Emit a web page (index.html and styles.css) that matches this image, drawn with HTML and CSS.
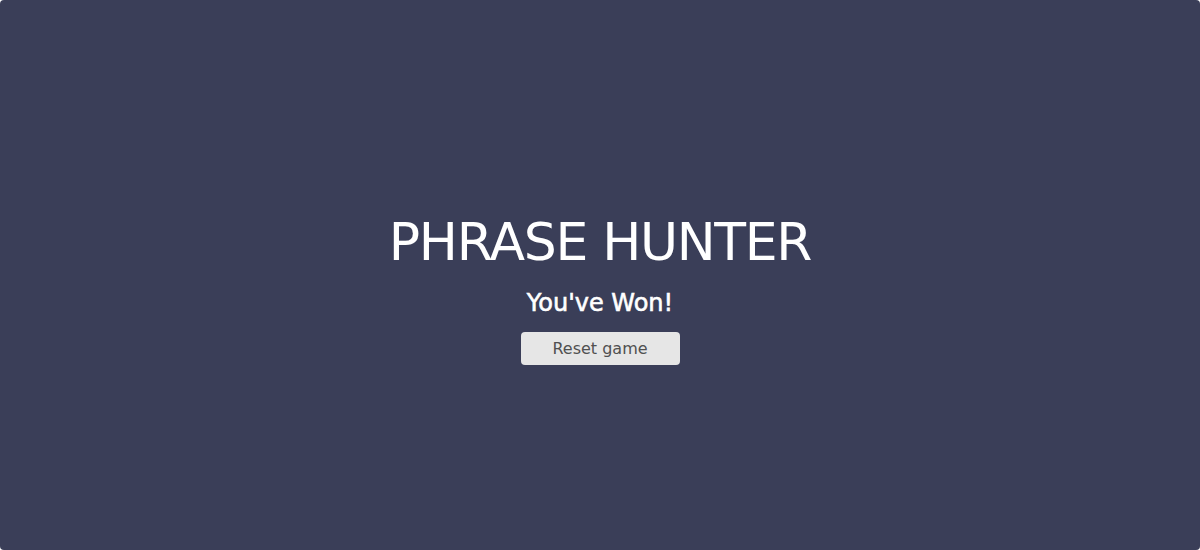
FILE: index.html
```html
<!DOCTYPE html>
<html lang="en">
<head>
<meta charset="utf-8">
<title>Phrase Hunter</title>
<link rel="stylesheet" href="styles.css">
</head>
<body>
<div class="overlay">
  <h2 class="title">PHRASE HUNTER</h2>
  <h1 class="message">You've Won!</h1>
  <button class="btn-reset">Reset game</button>
</div>
</body>
</html>
```
FILE: styles.css
```css
html, body {
  margin: 0;
  padding: 0;
  height: 100%;
  background: #ffffff;
}
body {
  font-family: "DejaVu Sans", sans-serif;
}
.overlay {
  box-sizing: border-box;
  height: 550px;
  background: #3a3e58;
  border-radius: 4px;
  display: flex;
  flex-direction: column;
  align-items: center;
  padding-top: 214px;
  color: #ffffff;
}
.title {
  margin: 0;
  font-size: 52px;
  font-weight: 400;
  line-height: 56px;
  letter-spacing: -1.3px;
}
.message {
  margin: 18px 0 0;
  font-size: 24px;
  font-weight: 400;
  line-height: 30px;
  -webkit-text-stroke: 0.6px #ffffff;
}
.btn-reset {
  margin-top: 14px;
  width: 159px;
  height: 33px;
  border: none;
  border-radius: 4px;
  background: #e6e6e6;
  color: #505050;
  font-family: "DejaVu Sans", sans-serif;
  font-size: 16px;
  padding: 0;
}
```
